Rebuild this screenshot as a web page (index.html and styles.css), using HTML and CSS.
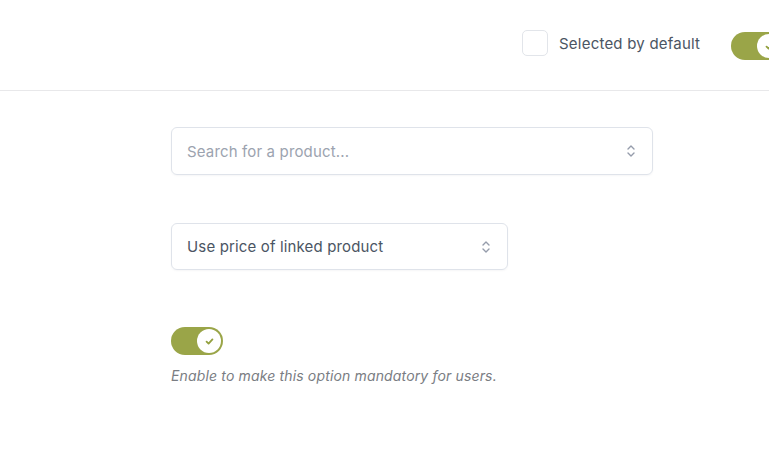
FILE: index.html
```html
<!DOCTYPE html>
<html lang="en">
<head>
<meta charset="utf-8">
<title>Option</title>
<link rel="stylesheet" href="styles.css">
</head>
<body>
<header class="topbar">
  <label class="check-row">
    <span class="checkbox"></span>
    <span class="check-label">Selected by default</span>
  </label>
  <span class="toggle toggle-top">
    <span class="knob">
      <svg viewBox="0 0 12 12" width="11" height="11"><path d="M2.8 6.2 L5 8.3 L9.2 3.8" fill="none" stroke="#93a03e" stroke-width="2" stroke-linecap="round" stroke-linejoin="round"/></svg>
    </span>
  </span>
</header>
<main class="content">
  <div class="field field-search">
    <span class="placeholder">Search for a product...</span>
    <svg class="chev" viewBox="0 0 10 16" width="10" height="16"><path d="M2 6 L5 3 L8 6 M2 10 L5 13 L8 10" fill="none" stroke="#959cab" stroke-width="1.4" stroke-linecap="round" stroke-linejoin="round"/></svg>
  </div>
  <div class="field field-select">
    <span class="value">Use price of linked product</span>
    <svg class="chev" viewBox="0 0 10 16" width="10" height="16"><path d="M2 6 L5 3 L8 6 M2 10 L5 13 L8 10" fill="none" stroke="#959cab" stroke-width="1.4" stroke-linecap="round" stroke-linejoin="round"/></svg>
  </div>
  <div class="mandatory">
    <span class="toggle">
      <span class="knob">
        <svg viewBox="0 0 12 12" width="11" height="11"><path d="M2.8 6.2 L5 8.3 L9.2 3.8" fill="none" stroke="#93a03e" stroke-width="2" stroke-linecap="round" stroke-linejoin="round"/></svg>
      </span>
    </span>
    <p class="help">Enable to make this option mandatory for users.</p>
  </div>
</main>
</body>
</html>
```
FILE: styles.css
```css
html, body {
  margin: 0;
  padding: 0;
  overflow: hidden;
  background: #ffffff;
  font-family: Inter, "Noto Sans", "Liberation Sans", sans-serif;
}

.topbar {
  height: 90px;
  border-bottom: 1px solid #e8e8ea;
  display: flex;
  align-items: center;
  padding-left: 522px;
  white-space: nowrap;
}

.check-row {
  display: flex;
  align-items: center;
  gap: 11px;
  margin-top: -4px;
}

.checkbox {
  width: 24px;
  height: 24px;
  border: 1px solid #e2e5ea;
  border-radius: 5px;
  background: #fff;
}

.check-label {
  font-size: 15px;
  letter-spacing: 0.22px;
  color: #4b5563;
}

.toggle {
  width: 52px;
  height: 28px;
  border-radius: 14px;
  background: #9aa548;
  display: flex;
  align-items: center;
  justify-content: flex-end;
  padding: 0 2px;
  box-sizing: border-box;
  flex-shrink: 0;
}

.toggle-top {
  margin-left: 31px;
  margin-top: 2px;
}

.knob {
  width: 24px;
  height: 24px;
  border-radius: 50%;
  background: #fff;
  display: flex;
  align-items: center;
  justify-content: center;
}

.content {
  padding-left: 171px;
  padding-top: 36px;
}

.field {
  box-sizing: border-box;
  height: 48px;
  border: 1px solid #dfe3ea;
  border-radius: 6px;
  display: flex;
  align-items: center;
  justify-content: space-between;
  padding: 0 16px 0 15px;
  font-size: 15px;
  letter-spacing: 0.15px;
  box-shadow: 0 1px 2px rgba(16, 24, 40, 0.04);
}

.field-search {
  width: 482px;
}

.field-select {
  width: 337px;
  height: 47px;
  margin-top: 48px;
}

.placeholder {
  color: #9ca3af;
}

.value {
  color: #4b5563;
}

.chev {
  display: block;
}

.mandatory {
  margin-top: 57px;
}

.help {
  margin: 12px 0 0 0;
  font-size: 14px;
  letter-spacing: 0.15px;
  font-style: italic;
  color: #7a7d83;
}
```
